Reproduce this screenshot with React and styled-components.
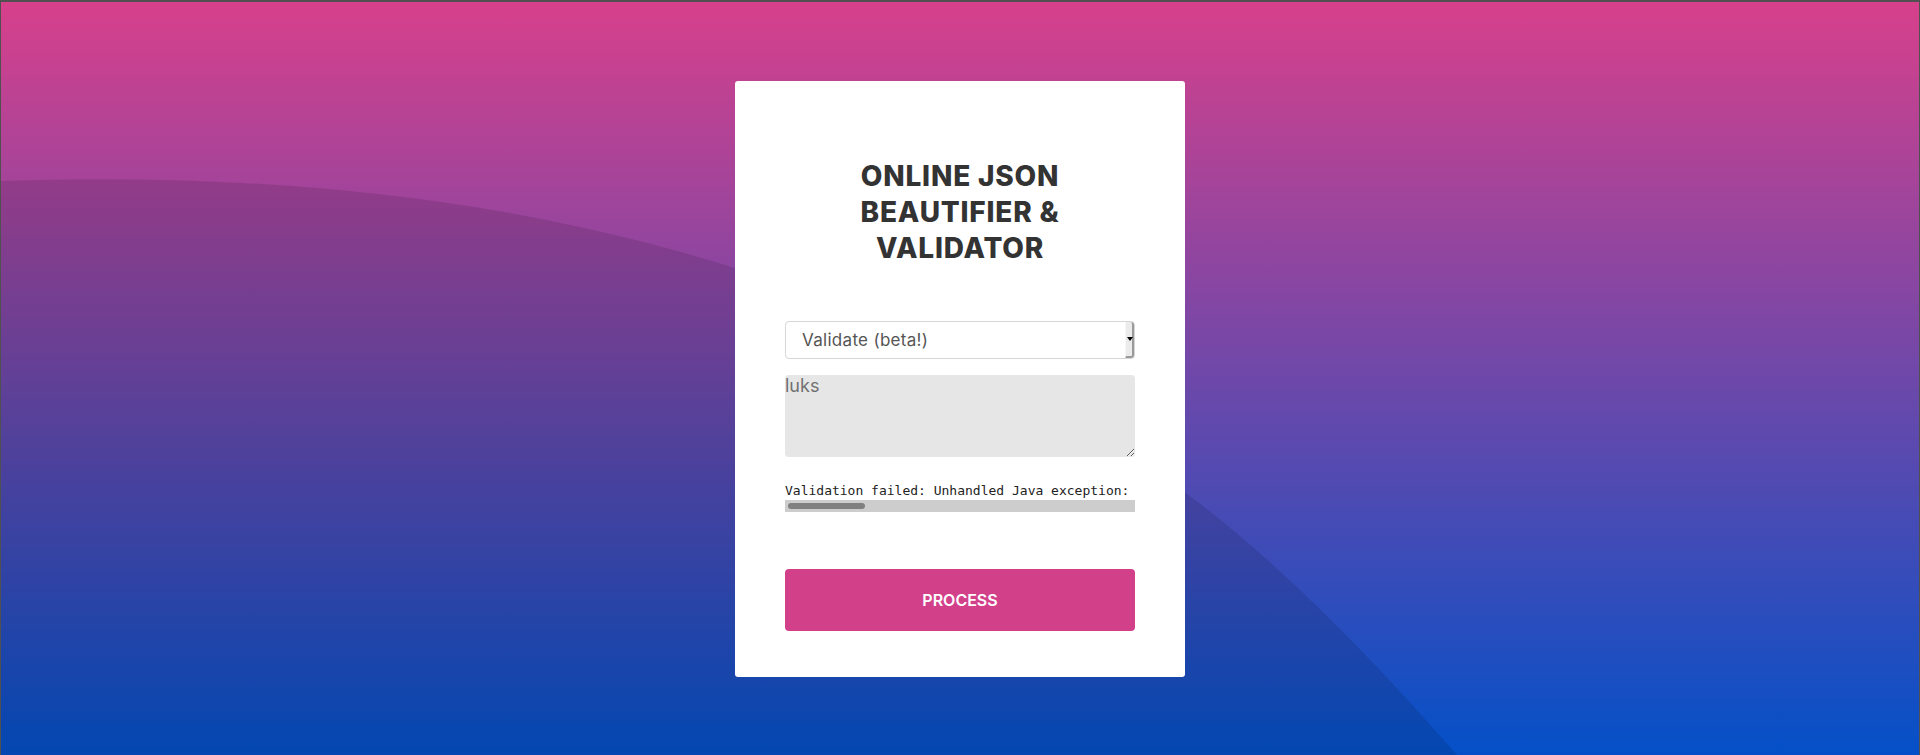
import React from 'react';
import styled, { createGlobalStyle } from 'styled-components';

const GlobalStyle = createGlobalStyle`
  * { box-sizing: border-box; }
  body {
    margin: 0;
    font-family: Inter, "Noto Sans", sans-serif;
  }
`;

// page with the gradient; the dark arc is drawn by Wave below
const Page = styled.div`
  position: relative;
  height: 755px;
  border: 1px solid #505050;
  border-top-width: 2px;
  border-bottom: none;
  background: linear-gradient(180deg, #d7408b 0%, #0450c8 100%);
  display: flex;
  justify-content: center;
  align-items: flex-start;
  padding-top: 79px;
  overflow: hidden;
`;

const Wave = styled.svg`
  position: absolute;
  left: 0;
  top: -2px;
  width: 1920px;
  height: 755px;
  pointer-events: none;
`;

const Card = styled.div`
  position: relative;
  width: 450px;
  height: 596px;
  background: #ffffff;
  border-radius: 3px;
  padding: 77px 50px 46px;
  display: flex;
  flex-direction: column;
`;

const Title = styled.h1`
  margin: 0 0 55px;
  font-family: Inter, sans-serif;
  font-weight: 800;
  font-size: 28px;
  line-height: 36px;
  color: #333333;
  text-align: center;
  letter-spacing: 0.8px;
`;

const SelectWrap = styled.div`
  position: relative;
  height: 38px;
`;

const Select = styled.select`
  appearance: none;
  width: 100%;
  height: 38px;
  border: 1px solid #d6d6d6;
  border-radius: 4px;
  background: #ffffff;
  padding: 0 16px;
  font-family: Inter, sans-serif;
  font-size: 17px;
  letter-spacing: 0.3px;
  color: #555555;
  outline: none;
`;

const Arrow = styled.span`
  position: absolute;
  right: 1px;
  top: 1px;
  width: 9px;
  height: 36px;
  background: #ebebeb;
  border-right: 2px solid #9a9a9a;
  border-bottom: 2px solid #9a9a9a;
  border-left: 1px solid #f7f7f7;
  border-radius: 0 3px 3px 0;
  pointer-events: none;

  &::after {
    content: '';
    position: absolute;
    left: 1px;
    top: 15px;
    border-left: 3px solid transparent;
    border-right: 3px solid transparent;
    border-top: 4px solid #000;
  }
`;

const Input = styled.textarea`
  margin-top: 16px;
  width: 100%;
  height: 82px;
  border: none;
  border-radius: 4px;
  background: #e6e6e6;
  padding: 0;
  font-family: Inter, sans-serif;
  font-size: 18px;
  color: #707070;
  resize: both;
  outline: none;
`;

const Output = styled.div`
  margin-top: 25px;
`;

const OutputText = styled.pre`
  margin: 0;
  font-family: "DejaVu Sans Mono", monospace;
  font-size: 13px;
  line-height: 17px;
  color: #222222;
  white-space: pre;
  overflow: hidden;
`;

const ScrollTrack = styled.div`
  margin-top: 1px;
  height: 12px;
  background: #cdcdcd;
  padding: 3px;
`;

const ScrollThumb = styled.div`
  width: 77px;
  height: 6px;
  border-radius: 3px;
  background: #808080;
`;

const Button = styled.button`
  margin-top: 57px;
  width: 100%;
  height: 62px;
  border: none;
  border-radius: 4px;
  background: #d3408a;
  color: #ffffff;
  font-family: Inter, sans-serif;
  font-weight: 600;
  font-size: 16px;
  cursor: pointer;
`;

const App = () => (
  <>
    <GlobalStyle />
    <Page>
      <Wave viewBox="0 0 1920 755" preserveAspectRatio="none">
        <path
          d="M0 181 C250 173 500 193 740 270 C890 316 1035 381 1185 493 C1275 560 1366 652 1456 755 L0 755 Z"
          fill="rgba(0,0,0,0.11)"
        />
      </Wave>
      <Card>
        <Title>
          ONLINE JSON
          <br />
          BEAUTIFIER &amp;
          <br />
          VALIDATOR
        </Title>
        <SelectWrap>
          <Select defaultValue="validate">
            <option value="validate">Validate (beta!)</option>
            <option value="beautify">Beautify</option>
          </Select>
          <Arrow />
        </SelectWrap>
        <Input defaultValue="luks" />
        <Output>
          <OutputText>Validation failed: Unhandled Java exception:</OutputText>
          <ScrollTrack>
            <ScrollThumb />
          </ScrollTrack>
        </Output>
        <Button>PROCESS</Button>
      </Card>
    </Page>
  </>
);

export default App;
